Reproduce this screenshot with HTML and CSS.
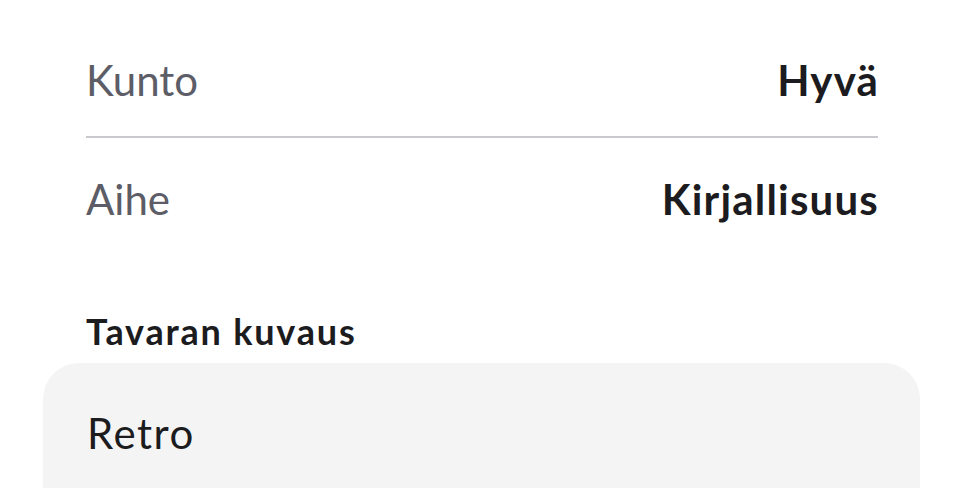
FILE: index.html
```html
<!DOCTYPE html>
<html lang="fi">
<head>
<meta charset="utf-8">
<link rel="stylesheet" href="styles.css">
</head>
<body>
<div class="page">
  <div class="details">
    <div class="row row-first">
      <span class="label">Kunto</span>
      <span class="value">Hyvä</span>
    </div>
    <div class="row row-second">
      <span class="label">Aihe</span>
      <span class="value">Kirjallisuus</span>
    </div>
  </div>
  <h2 class="section-title">Tavaran kuvaus</h2>
  <div class="desc-card">
    <p class="desc-text">Retro</p>
  </div>
</div>
</body>
</html>
```
FILE: styles.css
```css
html, body {
  margin: 0;
  padding: 0;
  background: #ffffff;
}
body {
  width: 960px;
  height: 488px;
  overflow: hidden;
  font-family: "Lato", "Noto Sans", sans-serif;
}
.page {
  padding-top: 19px;
}
.details {
  padding: 0 82px 0 86px;
}
.row {
  display: flex;
  justify-content: space-between;
  align-items: baseline;
  font-size: 42px;
  line-height: 50px;
}
.row-first {
  padding: 36px 0 31px;
  border-bottom: 2px solid #c9c9ce;
}
.row-second {
  padding-top: 36px;
}
.label {
  color: #5c5d66;
  font-weight: 400;
}
.value {
  color: #1b1b20;
  font-weight: 700;
  letter-spacing: 1.2px;
  margin-right: -1px;
}
.section-title {
  margin: 86px 0 0 86px;
  font-size: 36px;
  line-height: 43px;
  font-weight: 700;
  letter-spacing: 1.8px;
  color: #1c1c1f;
}
.desc-card {
  box-sizing: border-box;
  margin: 10px 40px 0 43px;
  background: #f4f4f4;
  border-radius: 36px 36px 0 0;
  padding: 45px 44px 0;
  height: 125px;
}
.desc-text {
  margin: 0;
  font-size: 42px;
  line-height: 50px;
  letter-spacing: 1.5px;
  color: #1c1c1e;
}
```
